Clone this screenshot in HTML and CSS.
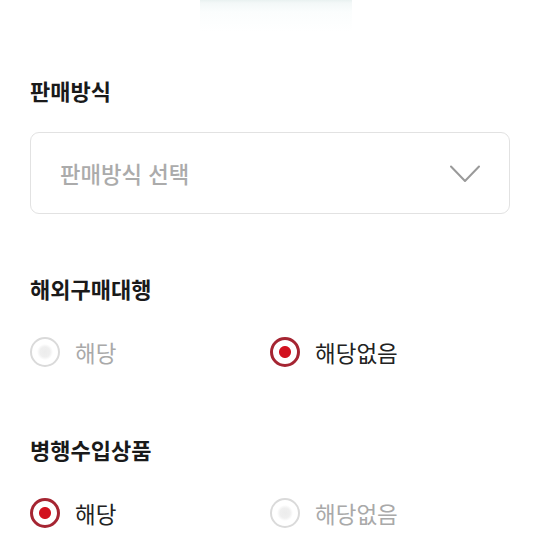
FILE: index.html
```html
<!DOCTYPE html>
<html lang="ko">
<head>
<meta charset="utf-8">
<link rel="stylesheet" href="styles.css">
</head>
<body>
<div class="page">
  <div class="top">
    <div class="top-fade"></div>
  </div>

  <section class="field field-select">
    <h2 class="label">판매방식</h2>
    <div class="select">
      <span class="placeholder">판매방식 선택</span>
      <svg class="chevron" width="30" height="18" viewBox="0 0 30 18" aria-hidden="true">
        <path d="M1 1.5 L15 16 L29 1.5" fill="none" stroke="#9a9a9a" stroke-width="2" stroke-linecap="round" stroke-linejoin="round"/>
      </svg>
    </div>
  </section>

  <section class="field field-radio first">
    <h2 class="label">해외구매대행</h2>
    <div class="radio-group">
      <label class="option"><span class="radio"></span><span class="opt-text">해당</span></label>
      <label class="option checked"><span class="radio"></span><span class="opt-text">해당없음</span></label>
    </div>
  </section>

  <section class="field field-radio second">
    <h2 class="label">병행수입상품</h2>
    <div class="radio-group">
      <label class="option checked"><span class="radio"></span><span class="opt-text">해당</span></label>
      <label class="option"><span class="radio"></span><span class="opt-text">해당없음</span></label>
    </div>
  </section>
</div>
</body>
</html>
```

FILE: styles.css
```css
* { box-sizing: border-box; }

html, body {
  margin: 0;
  padding: 0;
  background: #ffffff;
}

body {
  font-family: "Noto Sans CJK KR", "Noto Sans", sans-serif;
  color: #222222;
}

.page {
  width: 540px;
  padding: 0 30px;
}

.top {
  height: 76px;
  display: flex;
  justify-content: center;
}

.top-fade {
  width: 152px;
  height: 32px;
  margin-left: 12px;
  background: linear-gradient(to bottom, #e9f1f0 0px, #f3f8f8 3px, #fbfdfd 12px, #ffffff 32px);
}

.label {
  margin: 0;
  font-size: 22px;
  line-height: 28px;
  font-weight: 700;
  color: #1a1a1a;
}

.select {
  margin-top: 28px;
  height: 82px;
  border: 1px solid #e2e2e2;
  border-radius: 9px;
  display: flex;
  align-items: center;
  justify-content: space-between;
  padding: 0 29px 0 29px;
}

.placeholder {
  font-size: 22.3px;
  line-height: 28px;
  font-weight: 500;
  color: #ababab;
}

.chevron {
  display: block;
  margin-top: 2px;
}

.field-radio.first { margin-top: 60px; }
.field-radio.second { margin-top: 68px; }

.radio-group {
  margin-top: 35px;
  display: grid;
  grid-template-columns: 240px 240px;
}

.option {
  display: flex;
  align-items: center;
  gap: 15px;
  height: 30px;
}

.radio {
  width: 30px;
  height: 30px;
  border-radius: 50%;
  border: 2px solid #dadada;
  background: radial-gradient(circle, #ececec 0, #efefef 5px, #ffffff 8px);
  flex: none;
}

.opt-text {
  font-size: 22.5px;
  line-height: 28px;
  font-weight: 400;
  color: #a9a9a9;
}

.option.checked .radio {
  border: 3px solid #a52532;
  background: radial-gradient(circle, #d2121f 0, #d2121f 5.5px, #ffffff 6.5px);
}

.option.checked .opt-text {
  color: #222222;
}
```
